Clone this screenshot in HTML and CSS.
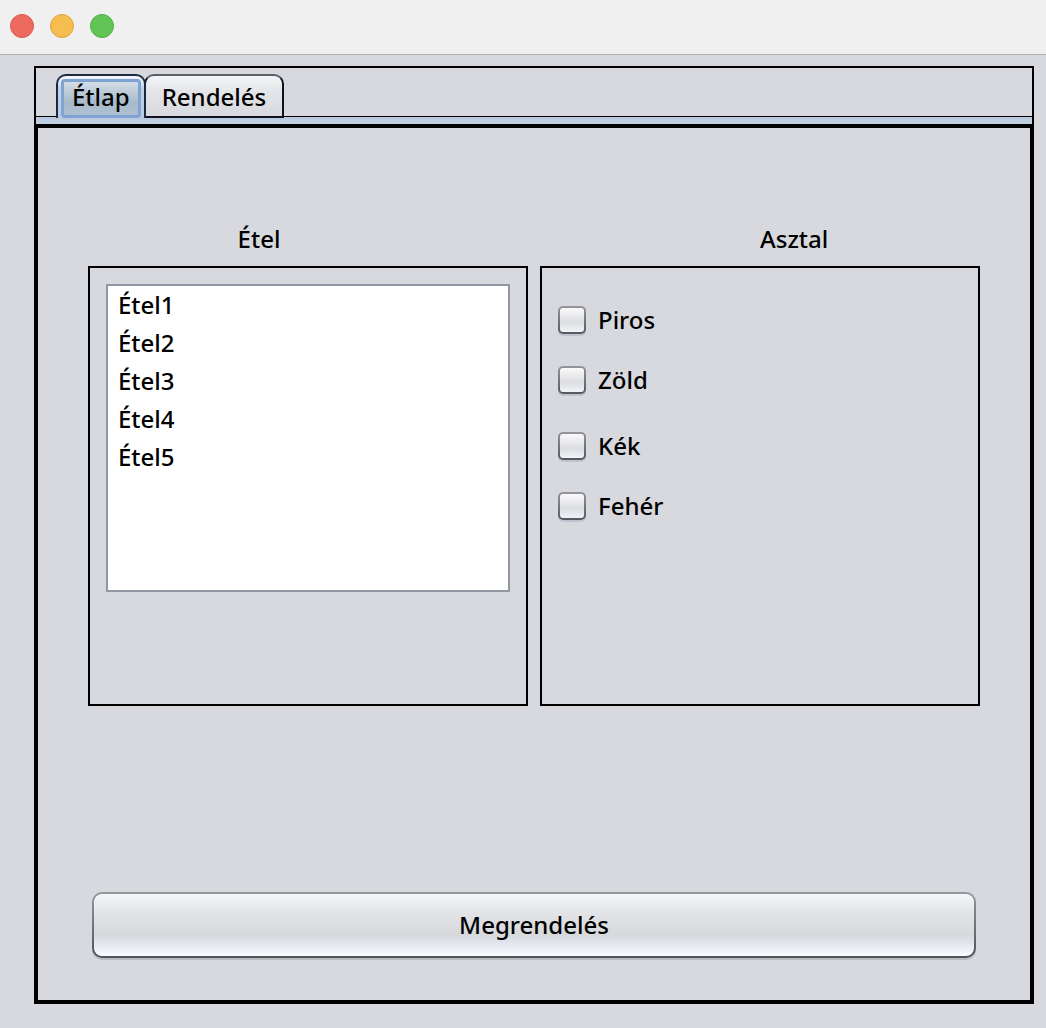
FILE: index.html
```html
<!DOCTYPE html>
<html lang="hu">
<head>
<meta charset="utf-8">
<meta name="viewport" content="width=device-width, initial-scale=1">
<title>Étlap</title>
<link rel="stylesheet" href="styles.css">
</head>
<body>
<header class="titlebar">
  <button class="light light-close" type="button" aria-label="Bezárás"></button>
  <button class="light light-minimize" type="button" aria-label="Kis méret"></button>
  <button class="light light-zoom" type="button" aria-label="Teljes méret"></button>
</header>
<main class="tabbed-pane">
  <div class="tab-strip" role="tablist">
    <button class="tab tab-selected" type="button" role="tab" id="tab-menu" aria-selected="true" aria-controls="panel-menu"><span class="tab-focus">Étlap</span></button>
    <button class="tab" type="button" role="tab" aria-selected="false">Rendelés</button>
  </div>
  <div class="tab-band"></div>
  <form class="panel" role="tabpanel" id="panel-menu" aria-labelledby="tab-menu">
    <div class="columns">
      <section class="column">
        <label class="heading heading-food" for="food">Étel</label>
        <div class="box box-food">
          <select class="food-list" id="food" name="food" size="8">
            <option>Étel1</option>
            <option>Étel2</option>
            <option>Étel3</option>
            <option>Étel4</option>
            <option>Étel5</option>
          </select>
        </div>
      </section>
      <section class="column" role="group" aria-labelledby="table-heading">
        <h2 class="heading heading-table" id="table-heading">Asztal</h2>
        <div class="box box-table">
          <div class="pair">
            <label class="choice"><input class="check" type="checkbox" name="red">Piros</label>
            <label class="choice"><input class="check" type="checkbox" name="green">Zöld</label>
          </div>
          <div class="pair">
            <label class="choice"><input class="check" type="checkbox" name="blue">Kék</label>
            <label class="choice"><input class="check" type="checkbox" name="white">Fehér</label>
          </div>
        </div>
      </section>
    </div>
    <button class="order" type="button">Megrendelés</button>
  </form>
</main>
</body>
</html>
```
FILE: styles.css
```css
* {
  box-sizing: border-box;
}

body {
  margin: 0;
  min-height: 100vh;
  display: flex;
  flex-direction: column;
  background: #d8d9de;
  color: #000;
  font-family: "Noto Sans", "Lucida Grande", sans-serif;
  font-size: 24px;
  font-weight: 500;
  line-height: 32px;
}

button,
select,
input {
  margin: 0;
  font: inherit;
  color: inherit;
}

.titlebar {
  display: flex;
  align-items: center;
  gap: 16px;
  height: 55px;
  padding: 0 10px 2px;
  background: #f0f0f0;
  border-bottom: 1px solid #b0b1b5;
}

.light {
  width: 24px;
  height: 24px;
  padding: 0;
  border: 1px solid;
  border-radius: 50%;
}

.light-close {
  background: #ed6a5f;
  border-color: #dc574d;
}

.light-minimize {
  background: #f6be50;
  border-color: #dda23c;
}

.light-zoom {
  background: #61c555;
  border-color: #50ad42;
}

.tabbed-pane {
  flex: 1;
  display: flex;
  flex-direction: column;
  margin: 11px 12px 24px 34px;
}

.tab-strip {
  display: flex;
  padding: 6px 20px 0;
  border: 2px solid #000;
  border-bottom: 0;
}

.tab {
  z-index: 1;
  height: 44px;
  margin: 0 0 -2px -2px;
  padding: 2px 16px 0;
  border: 2px solid #10111f;
  border-top-color: #5f6067;
  border-radius: 10px 10px 0 0;
  background: linear-gradient(#f5f6f8, #e4e5e8 40%, #d8d9de);
}

.tab-selected {
  z-index: 2;
  margin-left: 0;
  padding: 3px 3px 0;
  border-color: #1c2a40;
  border-bottom: 0;
  background: linear-gradient(#f7f9fc, #c3d3e5 30%, #b8cbdf);
}

.tab-focus {
  display: block;
  height: 39px;
  padding: 0 8px;
  border: 3px solid #7fa3d2;
  border-radius: 4px;
  background: linear-gradient(#d3dde6, #a9bac9 60%, #acbfd1);
  line-height: 30px;
}

.tab-band {
  height: 8px;
  border: 2px solid #000;
  border-top-width: 1px;
  border-bottom: 0;
  background: linear-gradient(#b9c8de, #c0d2e0);
}

.panel {
  flex: 1;
  display: flex;
  flex-direction: column;
  justify-content: space-between;
  gap: 40px;
  padding: 95px 50px 42px;
  border: 4px solid #000;
}

.columns {
  display: grid;
  grid-template-columns: 1fr 1fr;
  gap: 12px;
}

.column {
  display: flex;
  flex-direction: column;
  gap: 11px;
  min-width: 0;
}

.heading {
  margin: 0;
  font-size: 24px;
  font-weight: 500;
}

.heading-food {
  padding-left: 34%;
}

.heading-table {
  padding-left: 50%;
}

.box {
  flex: 1;
  min-height: 440px;
  border: 2px solid #000;
}

.box-food {
  padding: 16px;
}

.box-table {
  display: flex;
  flex-direction: column;
  gap: 34px;
  padding: 36px 16px;
}

.food-list {
  display: block;
  width: 100%;
  height: 308px;
  padding: 0;
  border: 2px solid #9297a1;
  border-radius: 0;
  outline: 0;
  background: #fff;
  overflow: hidden;
}

.food-list option {
  height: 38px;
  padding: 2px 10px 0;
  font-weight: 500;
  line-height: 36px;
}

.pair {
  display: flex;
  flex-direction: column;
  gap: 28px;
}

.choice {
  display: flex;
  align-items: center;
  gap: 12px;
}

.check {
  appearance: none;
  width: 28px;
  height: 28px;
  border: 2px solid transparent;
  border-radius: 5px;
  background:
    linear-gradient(#fafafb, #dcdde1 60%, #f0f4f8) padding-box,
    linear-gradient(#94969c, #56585f) border-box;
  box-shadow: 0 2px 0 #bfc2cf;
}

.check:checked {
  background:
    linear-gradient(#a9c2dc, #7396bb) padding-box,
    linear-gradient(#94969c, #56585f) border-box;
}

.order {
  height: 66px;
  margin: 0 4px;
  border: 2px solid transparent;
  border-radius: 10px;
  background:
    linear-gradient(#f6f7f8, #e3e4e7 30%, #d7d8dc 65%, #e4e8ef 82%, #fafcff) padding-box,
    linear-gradient(#94999e, #505257) border-box;
  box-shadow: 0 2px 0 #b7b9be;
}
```
